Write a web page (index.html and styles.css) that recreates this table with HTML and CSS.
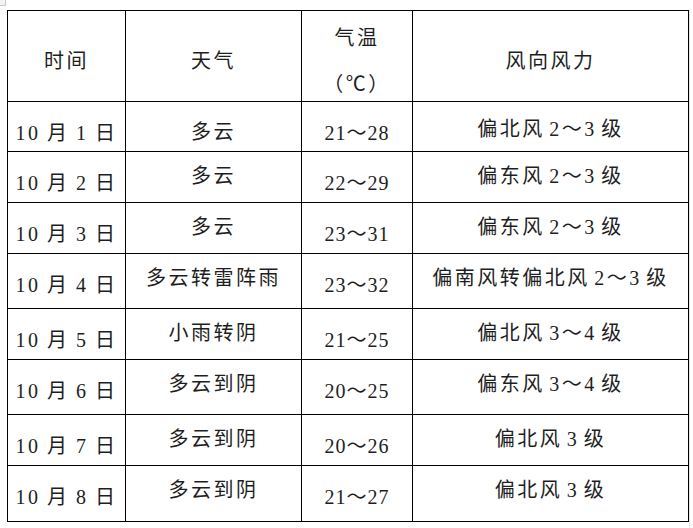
FILE: index.html
```html
<!DOCTYPE html>
<html lang="zh-CN">
<head>
<meta charset="utf-8">
<title>天气预报</title>
<link rel="stylesheet" href="styles.css">
</head>
<body>
<span class="handle"></span>
<span class="edge"></span>
<table class="forecast">
  <colgroup>
    <col class="c-date">
    <col class="c-weather">
    <col class="c-temp">
    <col class="c-wind">
  </colgroup>
  <thead>
    <tr class="r-head">
      <th class="hd">时间</th>
      <th class="hd">天气</th>
      <th class="hd hd-temp"><span class="ln ln-top">气温</span><span class="ln">（℃）</span></th>
      <th class="hd">风向风力</th>
    </tr>
  </thead>
  <tbody>
    <tr class="r-s">
      <td class="date">10 月 1 日</td>
      <td class="txt txt-low">多云</td>
      <td class="temp">21～28</td>
      <td class="txt txt-mid">偏北风 2～3 级</td>
    </tr>
    <tr class="r-m">
      <td class="date">10 月 2 日</td>
      <td class="txt">多云</td>
      <td class="temp">22～29</td>
      <td class="txt">偏东风 2～3 级</td>
    </tr>
    <tr class="r-m">
      <td class="date">10 月 3 日</td>
      <td class="txt">多云</td>
      <td class="temp">23～31</td>
      <td class="txt">偏东风 2～3 级</td>
    </tr>
    <tr class="r-l">
      <td class="date">10 月 4 日</td>
      <td class="txt">多云转雷阵雨</td>
      <td class="temp">23～32</td>
      <td class="txt">偏南风转偏北风 2～3 级</td>
    </tr>
    <tr class="r-m">
      <td class="date">10 月 5 日</td>
      <td class="txt">小雨转阴</td>
      <td class="temp">21～25</td>
      <td class="txt">偏北风 3～4 级</td>
    </tr>
    <tr class="r-l">
      <td class="date">10 月 6 日</td>
      <td class="txt">多云到阴</td>
      <td class="temp">20～25</td>
      <td class="txt">偏东风 3～4 级</td>
    </tr>
    <tr class="r-m">
      <td class="date">10 月 7 日</td>
      <td class="txt">多云到阴</td>
      <td class="temp">20～26</td>
      <td class="txt">偏北风 3 级</td>
    </tr>
    <tr class="r-xl">
      <td class="date">10 月 8 日</td>
      <td class="txt">多云到阴</td>
      <td class="temp">21～27</td>
      <td class="txt">偏北风 3 级</td>
    </tr>
  </tbody>
</table>
</body>
</html>
```

FILE: styles.css
```css
html, body {
  margin: 0;
  padding: 0;
  background: #ffffff;
}

body {
  position: relative;
  width: 693px;
  height: 528px;
  overflow: hidden;
  font-family: "Liberation Serif", "Noto Sans CJK SC", serif;
  color: #1e1e1e;
}

.handle {
  position: absolute;
  left: 0;
  top: 0;
  width: 5px;
  height: 5px;
  border: 1px solid #c8c8c8;
  border-top: none;
  border-left: none;
  background: #f4f4f4;
}

.edge {
  position: absolute;
  left: 689px;
  top: 10px;
  width: 0;
  height: 518px;
  border-left: 1px solid #e4e4e4;
}

.forecast {
  margin: 10px 0 0 7px;
  border-collapse: collapse;
  table-layout: fixed;
  width: 681px;
}

.c-date { width: 118px; }
.c-weather { width: 176px; }
.c-temp { width: 111px; }
.c-wind { width: 276px; }

.forecast th,
.forecast td {
  border: 1.5px solid #000;
  padding: 0;
  text-align: center;
  vertical-align: top;
  font-size: 20px;
  line-height: 20px;
  font-weight: normal;
  white-space: nowrap;
  letter-spacing: 2.5px;
  box-sizing: border-box;
}

.forecast .r-head { height: 91px; }
.forecast .r-s { height: 50px; }
.forecast .r-m { height: 51px; }
.forecast .r-l { height: 55px; }
.forecast .r-xl { height: 56px; }

.forecast .hd {
  padding-top: 40px;
}

.forecast .hd.hd-temp {
  padding-top: 16px;
}

.hd-temp .ln {
  display: block;
  line-height: 22px;
}

.hd-temp .ln-top {
  margin-bottom: 24px;
}

.forecast .date {
  padding-top: 21px;
  word-spacing: -1px;
}

.forecast .temp {
  padding-top: 21px;
  letter-spacing: 1px;
}

.forecast .txt {
  padding-top: 14px;
  word-spacing: -3px;
}

.forecast .txt.txt-low {
  padding-top: 20px;
}

.forecast .txt.txt-mid {
  padding-top: 17px;
}
```
